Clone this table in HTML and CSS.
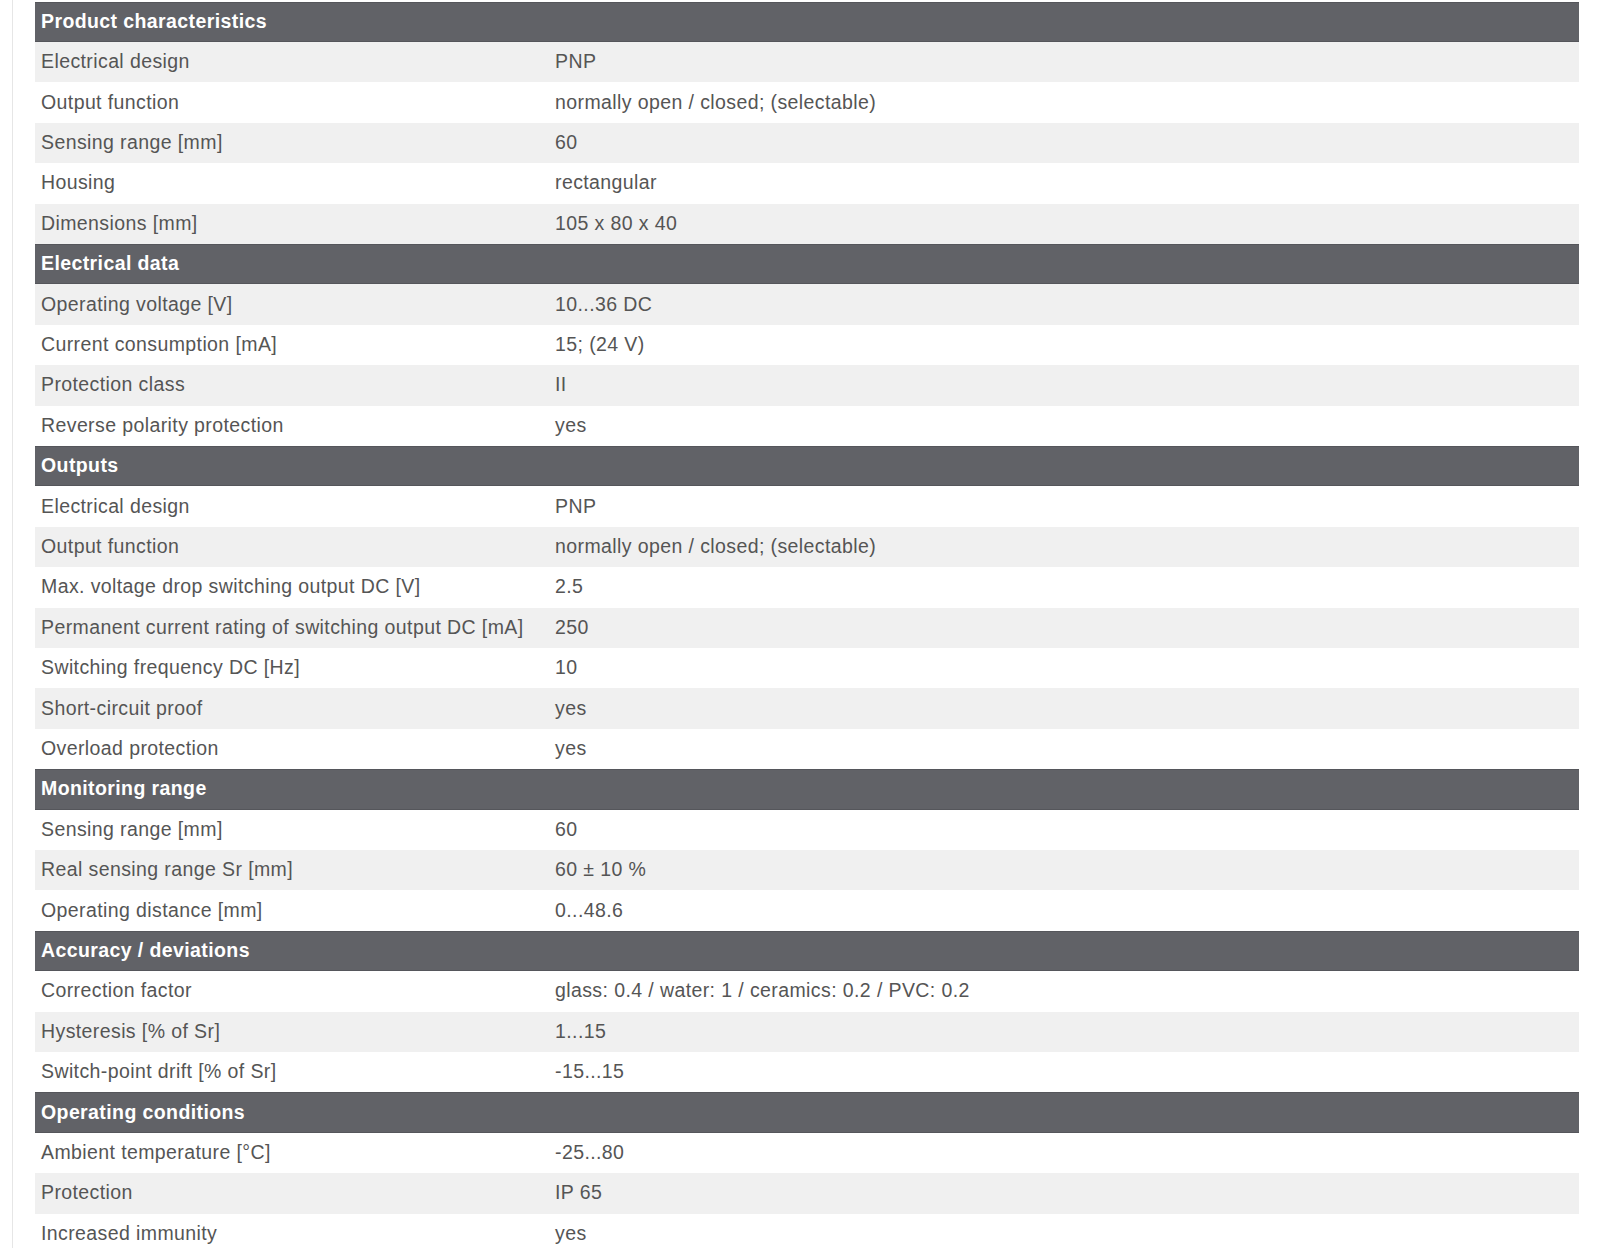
FILE: index.html
```html
<!DOCTYPE html>
<html>
<head>
<meta charset="utf-8">
<link rel="stylesheet" href="styles.css">
</head>
<body>
<div class="page">
  <div class="specs">
    <div class="sec">Product characteristics</div>
    <div class="row odd"><span class="k">Electrical design</span><span class="v">PNP</span></div>
    <div class="row"><span class="k">Output function</span><span class="v">normally open / closed; (selectable)</span></div>
    <div class="row odd"><span class="k">Sensing range [mm]</span><span class="v">60</span></div>
    <div class="row"><span class="k">Housing</span><span class="v">rectangular</span></div>
    <div class="row odd"><span class="k">Dimensions [mm]</span><span class="v">105 x 80 x 40</span></div>

    <div class="sec">Electrical data</div>
    <div class="row odd"><span class="k">Operating voltage [V]</span><span class="v">10...36 DC</span></div>
    <div class="row"><span class="k">Current consumption [mA]</span><span class="v">15; (24 V)</span></div>
    <div class="row odd"><span class="k">Protection class</span><span class="v">II</span></div>
    <div class="row"><span class="k">Reverse polarity protection</span><span class="v">yes</span></div>

    <div class="sec">Outputs</div>
    <div class="row"><span class="k">Electrical design</span><span class="v">PNP</span></div>
    <div class="row odd"><span class="k">Output function</span><span class="v">normally open / closed; (selectable)</span></div>
    <div class="row"><span class="k">Max. voltage drop switching output DC [V]</span><span class="v">2.5</span></div>
    <div class="row odd"><span class="k">Permanent current rating of switching output DC [mA]</span><span class="v">250</span></div>
    <div class="row"><span class="k">Switching frequency DC [Hz]</span><span class="v">10</span></div>
    <div class="row odd"><span class="k">Short-circuit proof</span><span class="v">yes</span></div>
    <div class="row"><span class="k">Overload protection</span><span class="v">yes</span></div>

    <div class="sec">Monitoring range</div>
    <div class="row"><span class="k">Sensing range [mm]</span><span class="v">60</span></div>
    <div class="row odd"><span class="k">Real sensing range Sr [mm]</span><span class="v">60 ± 10 %</span></div>
    <div class="row"><span class="k">Operating distance [mm]</span><span class="v">0...48.6</span></div>

    <div class="sec">Accuracy / deviations</div>
    <div class="row"><span class="k">Correction factor</span><span class="v">glass: 0.4 / water: 1 / ceramics: 0.2 / PVC: 0.2</span></div>
    <div class="row odd"><span class="k">Hysteresis [% of Sr]</span><span class="v">1...15</span></div>
    <div class="row"><span class="k">Switch-point drift [% of Sr]</span><span class="v">-15...15</span></div>

    <div class="sec">Operating conditions</div>
    <div class="row"><span class="k">Ambient temperature [°C]</span><span class="v">-25...80</span></div>
    <div class="row odd"><span class="k">Protection</span><span class="v">IP 65</span></div>
    <div class="row"><span class="k">Increased immunity</span><span class="v">yes</span></div>
  </div>
</div>
</body>
</html>
```

FILE: styles.css
```css
html, body {
  margin: 0;
  padding: 0;
  background: #ffffff;
}
body {
  font-family: "Liberation Sans", Arial, sans-serif;
  overflow: hidden;
  height: 1248px;
}
.page {
  margin-left: 12px;
  border-left: 1px solid #e6e6e6;
  min-height: 1248px;
  padding-left: 22px;
  padding-right: 21px;
  padding-top: 1.5px;
}
.specs {
  display: flex;
  flex-direction: column;
}
.sec {
  height: 40.42px;
  flex: none;
  box-sizing: border-box;
  background: #616267;
  border-top: 1px solid #55565b;
  border-bottom: 1px solid #55565b;
  color: #ffffff;
  font-weight: bold;
  font-size: 19.5px;
  letter-spacing: 0.4px;
  display: flex;
  align-items: center;
  padding-left: 6px;
  padding-bottom: 1px;
}
.row {
  height: 40.42px;
  flex: none;
  display: grid;
  grid-template-columns: 514px 1fr;
  align-items: center;
  color: #555555;
  font-size: 19.5px;
  letter-spacing: 0.4px;
  background: #ffffff;
}
.row.odd {
  background: #f0f0f0;
}
.k, .v {
  padding-left: 6px;
  padding-bottom: 1px;
  white-space: nowrap;
}
```
